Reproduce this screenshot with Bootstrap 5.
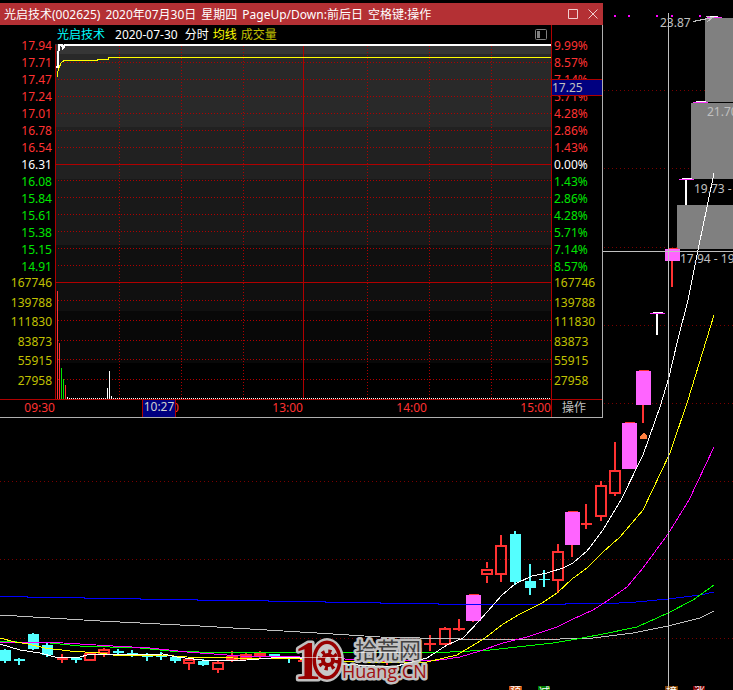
<!DOCTYPE html>
<html lang="zh-CN">
<head>
<meta charset="utf-8">
<meta name="viewport" content="width=device-width, initial-scale=1">
<title>光启技术 分时</title>
<link href="https://cdn.jsdelivr.net/npm/bootstrap@5.3.0/dist/css/bootstrap.min.css" rel="stylesheet">
<style>
body{background:#000;color:#c0c0c0;font:12px/17px "Noto Sans","Noto Sans CJK SC",sans-serif;overflow-x:hidden}
svg{display:block}
.kline{width:100%;height:auto;shape-rendering:crispEdges}
.kline text{fill:#c0c0c0;font-size:12px}
.ma{fill:none;stroke-width:1}
.dots{stroke:#780000;stroke-dasharray:1 3}
.site-mark{shape-rendering:auto;paint-order:stroke;stroke-linejoin:round}
.kline .site-mark text{stroke:#c0c0c0;stroke-width:5px}
.kline .mark-one{font:bold 54px "Liberation Serif",serif;fill:#980000}
.kline .mark-name{font-size:22px;fill:#404040}
.kline .mark-domain{font:18px "Open Sans",sans-serif;fill:#a01010}
.kline .badges text{fill:#fff;font-size:11px}
.tick-window{top:3px;left:0;width:603px;max-width:100%;background:#000;border-right:1px solid #b0b0b0;border-bottom:1px solid #b0b0b0}
.title-strip{height:22px;background:#b43034;color:#fff;margin-right:-1px}
.title-text{gap:5px}
.win-btn{background:none;border:0;padding:0;color:#f0d0d0}
.scale-left,.time-left{width:55px;flex:none}
.scale-right{width:51px;flex:none;border-left:1px solid #b00000}
.scale-left,.scale-right{padding-top:12px;height:374px}
.scale-left{padding-right:3px}
.scale-right{padding-left:2px}
.price-scale{height:236px}
.volume-scale{height:117px}
.up{color:#ff3232}.down{color:#00e600}.vol{color:#c0c000}.avg{color:#ff0}.stock{color:#0ff;padding-right:6px}
.info-line{height:19px;gap:4px;padding-left:2px}
.info-date{padding-right:3px}
.time-row{height:18px;border-top:1px solid #b00000;line-height:15px}
.time-row .scale-right{height:auto;padding:0 0 0 10px;color:#c0c0c0}
.cursor-price{left:0;right:0;top:54px;height:17px;background:#000080;border:solid #b00000;border-width:1px 0;line-height:15px;color:#c0c0c0}
.cursor-time{left:87px;top:0;height:17px;width:34px;background:#000080;border:solid #b00000;border-width:0 1px;line-height:14px;color:#d0d0d0}
.grid-dot{stroke:#b00000;stroke-dasharray:1 2}
</style>
</head>
<body>
<main class="position-relative">
<svg class="kline" viewBox="0 0 733 690" role="img" aria-label="日K线">
<path class="dots" d="M0 90.5H733M0 168.5H733M0 247.5H733M0 325.5H733M0 403.5H733M0 481.5H733M0 559.5H733M0 638.5H733"/>
<path fill="#808080" d="M705 18h28v84h-28zM691 103h42v76h-42zM677 205h56v44h-56z"/>
<path fill="#f0f" d="M614 15h2v2h-2zM628 15h2v2h-2zM656 15h2v2h-2zM671 15h2v2h-2zM699 15h2v2h-2z"/>
<!-- falling days -->
<path fill="#54ffff" d="M0 650h11v11H0zM14 659h11v2H14zM28 634h11v15H28zM42 645h11v10H42zM71 658h11v2H71zM113 651h11v2H113zM127 653h11v2H127zM142 655h11v2H142zM156 655h11v2H156zM170 657h11v4H170zM198 661h11v4H198zM269 654h11v2H269zM284 657h11v2H284zM326 662h11v4H326zM340 664h11v2H340zM510 534h11v48H510zM525 581h11v7H525zM539 579h11v1H539z"/>
<path stroke="#54ffff" stroke-width="2" d="M5 649V663M19 658V665M33 633V650M47 643V657M76 657V663M118 649V654M132 650V657M147 653V661M161 652V660M175 657V663M203 659V666M274 654V657M289 656V663M331 660V668M515 531V585M530 564V595M544 570V587"/>
<!-- rising days -->
<path fill="#ff3232" d="M57 658h11v2H57zM226 656h12v5H226zM240 654h12v6H240zM254 653h12v3H254zM298 660h11v2H298zM380 661h12v2H380zM424 643h12v2H424zM453 628h12v2H453zM581 523h11v2H581z"/>
<path stroke="#ff3232" stroke-width="2" fill="none" d="M62 654V663M104 648V650M104 655V657M189 657V659M189 664V670M218 660V662M218 670V673M232 651V662M246 653V660M260 651V658M387 658V665M430 635V651M445 627V629M459 619V631M487 562V568M487 576V583M501 535V545M501 575V582M558 544V551M558 580V593M572 545V557M586 504V529M601 481V485M601 517V521M615 442V470M615 494V496M643 405V423M672 261V287M473 620V622M85 654h10v6H85zM99 650h10v3H99zM184 660h10v3H184zM213 663h10v6H213zM411 649h10v7H411zM440 629h10v15H440zM482 570h10v4H482zM496 546h10v28H496zM553 552h10v28H553zM596 486h10v30H596zM610 471h10v22H610z"/>
<path fill="#ff32ff" d="M650 313h15v1H650zM679 179h15v1H679zM693 102h15v1H693zM707 17h15v1H707z"/>
<path fill="#ff64ff" d="M466 595h15v26H466zM565 512h15v33H565zM622 423h15v46H622zM636 371h15v34H636zM665 249h15v12H665z"/>
<path fill="#ff3232" d="M469 594h10v1H469zM568 511h10v1H568zM625 422h10v1H625zM639 370h10v1H639zM668 248h10v1H668z"/>
<path fill="#fff" d="M653 312h10v1H653zM656 314h2v21H656zM682 178h10v1H682zM685 180h2v25H685zM696 101h10v1H696zM710 16h8v1H710z"/>
<path d="M640 439v-3l3-3h1l3 3v3z" fill="#ff8040"/>
<g class="ma">
<path stroke="#00f" d="M0 596.5H27V597.5H84V598.5H140V599.5H197V600.5H268V601.5H325V602.5H380V603.5H438V604.5H565V603.5H610L636 602L668 599L700 595L714 592"/>
<path stroke="#c0c0c0" d="M0 615L100 621L200 626L300 632L333 634L380 637L460 639L560 639L593 638L633 633L668 626L700 618L714 611"/>
<path stroke="#0f0" d="M0 641L17 642L50 643L80 646L140 648L170 651L213 652.5H440L490 650L553 643L577 639L603 634L637 627L668 613L693 600L714 585"/>
<path stroke="#f0f" d="M0 643L13 642.5H55L113 646L150 648L187 652L240 656L300 657L390 661L440 660L460 657L480 651L503 643L527 637L557 627L573 619L593 610L607 601L627 587L643 568L668 534L689 500L714 447"/>
<path stroke="#ff0" d="M0 638L15 642L28 644L45 648L70 651L100 653L113 655H160L187 657L233 658L300 659L363 662H427L457 655L485 638L503 624L520 614L542 603L557 593L572 579L587 568L603 552L620 537L643 510L670 453L688 400L714 315"/>
<path stroke="#fff" d="M0 644L20 650L40 653L55 657H80L87 655L163 654L177 657L210 661L247 660L283 657L300 658L340 664L393 667L427 658L447 645L463 638L480 620L502 595L515 584L532 576L547 573L563 568L573 563L587 551L603 530L621 500L643 455L660 407L669 377L677 343L688 300L698 250L707 207L714 173"/>
</g>
<path fill="#c0c0c0" d="M668 13h1v677h-1zM603 251h130v1H603z"/>
<path d="M693 21.500L713 17.500M706 16.500L713 17.500L707 22" fill="none" stroke="#c0c0c0"/>
<text x="660" y="27">23.87</text><text x="707" y="116">21.70</text><text x="694" y="193">19.73 - 21.70</text><text x="680" y="263">17.94 - 19.73</text>
<g class="site-mark">
<ellipse cx="327" cy="660" rx="17" ry="22" fill="#c0c0c0"/>
<text class="mark-one" x="294" y="679">1</text>
<ellipse cx="327" cy="660" rx="11" ry="16" fill="#c8c8c8" stroke="#980000" stroke-width="7"/>
<circle cx="328" cy="660" r="8" fill="none" stroke="#980000" stroke-width="5" stroke-dasharray="3 3.280"/>
<circle cx="328" cy="660" r="5" fill="none" stroke="#980000" stroke-width="4"/>
<text class="mark-name" x="355" y="658">拾荒网</text>
<text class="mark-domain" x="342" y="678">Huang.CN</text>
<path opacity=".6" stroke="#fff" fill="none" d="M300 657.500H342M355 652.500H421M342 664L393 667L427 658"/>
</g>
<g class="badges">
<path fill="#c85010" d="M509 686h13v4h-13z"/><path fill="#008000" d="M538 686h12v4h-12z"/><path fill="#804000" d="M665 686h13v4h-13z"/><path fill="#800000" d="M693 686h12v4h-12z"/>
<text x="510" y="696">预</text><text x="539" y="696">减</text><text x="666" y="696">榜</text><text x="694" y="696">涨</text>
</g>
</svg>

<section class="tick-window position-absolute" aria-label="分时窗口">
<header class="title-strip d-flex align-items-center px-1">
<div class="title-text flex-grow-1 d-flex text-nowrap"><span>光启技术(002625)</span><span>2020年07月30日</span><span>星期四</span><span>PageUp/Down:前后日</span><span>空格键:操作</span></div>
<button class="win-btn me-2" aria-label="最大化"><svg width="12" height="12" fill="none" stroke="currentColor"><path d="M1.500 1.500h9v9h-9z"/></svg></button>
<button class="win-btn" aria-label="关闭"><svg width="12" height="12" fill="none" stroke="currentColor"><path d="M1.500 1.500l9 9M10.500 1.500l-9 9"/></svg></button>
</header>
<div class="d-flex">
<div class="scale-left text-end">
<div class="price-scale d-flex flex-column justify-content-around up"><span>17.94</span><span>17.71</span><span>17.47</span><span>17.24</span><span>17.01</span><span>16.78</span><span>16.54</span><span class="text-white">16.31</span><span class="down">16.08</span><span class="down">15.84</span><span class="down">15.61</span><span class="down">15.38</span><span class="down">15.15</span><span class="down">14.91</span></div>
<div class="volume-scale d-flex flex-column justify-content-around vol"><span>167746</span><span>139788</span><span>111830</span><span>83873</span><span>55915</span><span>27958</span></div>
</div>
<div class="flex-grow-1">
<div class="info-line d-flex align-items-center text-nowrap"><span class="stock">光启技术</span><span class="info-date text-white">2020-07-30</span><span class="text-white">分时</span><span class="avg">均线</span><span class="vol">成交量</span>
<button class="win-btn ms-auto me-1" aria-label="侧栏"><svg width="12" height="11" fill="none" stroke="#808080"><rect x=".5" y=".5" width="11" height="10" rx="1"/><path fill="#808080" stroke="none" d="M2 2h3v7H2z"/></svg></button></div>
<svg width="100%" height="355" viewBox="55 44 496 355" preserveAspectRatio="none" shape-rendering="crispEdges" role="img" aria-label="分时走势">
<path fill="#363636" d="M55 44h496v10H55z"/><path fill="#292929" d="M55 54h496v73H55z"/><path fill="#212121" d="M55 127h496v52H55z"/><path fill="#191919" d="M55 179h496v66H55z"/><path fill="#101010" d="M55 245h496v66H55z"/><path fill="#080808" d="M55 311h496v52H55z"/>
<path class="grid-dot" d="M55 62.500H551M55 79.500H551M55 96.500H551M55 113.500H551M55 130.500H551M55 147.500H551M55 180.500H551M55 197.500H551M55 214.500H551M55 231.500H551M55 248.500H551M55 265.500H551M55 300.500H551M55 320.500H551M55 340.500H551M55 359.500H551M55 379.500H551M119.500 46V399M181.500 46V399M243.500 46V399M367.500 46V399M429.500 46V399M491.500 46V399"/>
<path stroke="#b00000" d="M55.500 45V399M303.500 45V399M55 164.500H551M55 282.500H551"/>
<path stroke="#ff3232" d="M57.500 291V399M59.500 343V399M65.500 385V399"/><path stroke="#00e600" d="M61.500 368V399M63.500 379V399"/>
<path stroke="#fff" d="M67.500 397V399M107.500 388V399M109.500 371V399M111.500 396V399"/><path stroke="#fff" stroke-dasharray="1 1" d="M69 398.500H551"/>
<path fill="none" stroke="#ff0" d="M57.500 77V73L59 68L61 63L64 60.500H97V59.500H108L109 57.500H551"/>
<path fill="none" stroke="#fff" stroke-width="2" d="M56 67H58V58L59 45H62L63 48L65 45H551"/>
</svg>
</div>
<div class="scale-right position-relative">
<div class="price-scale d-flex flex-column justify-content-around up"><span>9.99%</span><span>8.57%</span><span>7.14%</span><span>5.71%</span><span>4.28%</span><span>2.86%</span><span>1.43%</span><span class="text-white">0.00%</span><span class="down">1.43%</span><span class="down">2.86%</span><span class="down">4.28%</span><span class="down">5.71%</span><span class="down">7.14%</span><span class="down">8.57%</span></div>
<div class="volume-scale d-flex flex-column justify-content-around vol"><span>167746</span><span>139788</span><span>111830</span><span>83873</span><span>55915</span><span>27958</span></div>
<div class="cursor-price position-absolute">17.25</div>
</div>
</div>
<div class="time-row d-flex up text-end">
<span class="time-left">09:30</span>
<div class="d-flex flex-grow-1 position-relative"><span class="w-25">10:30</span><span class="w-25">13:00</span><span class="w-25">14:00</span><span class="w-25">15:00</span>
<span class="cursor-time position-absolute text-center">10:27</span></div>
<div class="scale-right text-start"><span>操作</span></div>
</div>
</section>
</main>
<script src="https://cdn.jsdelivr.net/npm/bootstrap@5.3.0/dist/js/bootstrap.bundle.min.js"></script>
</body>
</html>
